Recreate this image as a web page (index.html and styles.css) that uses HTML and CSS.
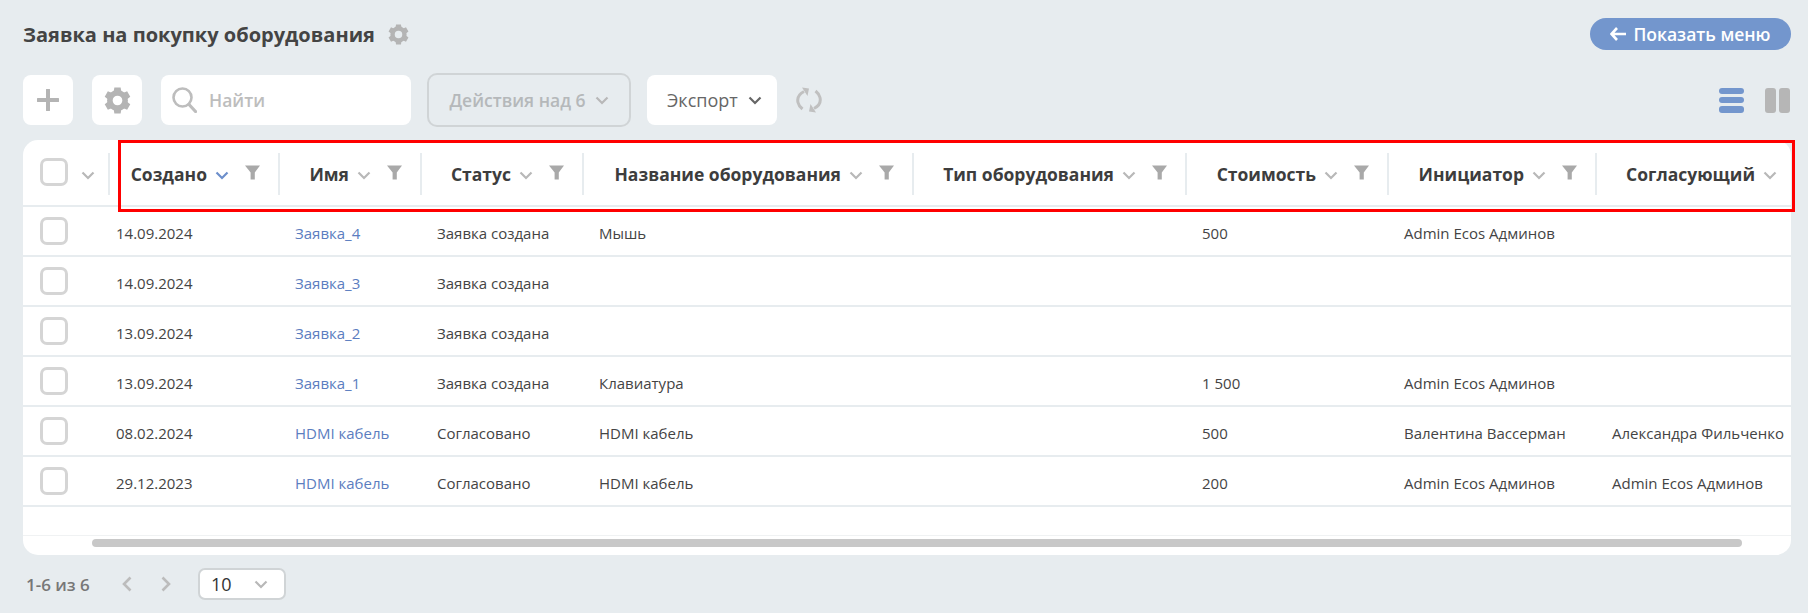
FILE: index.html
```html
<!DOCTYPE html>
<html lang="ru">
<head>
  <meta charset="UTF-8">
  <title>Заявка на покупку оборудования</title>
  <link rel="stylesheet" href="styles.css">
</head>
<body>
  <svg class="defs" width="0" height="0">
    <symbol id="gear" viewBox="0 0 24 24">
      <circle cx="12" cy="12" r="6.8" fill="none" stroke="currentColor" stroke-width="5"/>
      <g fill="currentColor">
        <path id="teeth" d="M9.2 .5h5.6l.6 4h-6.8zM8.6 19.500h6.800l-.6 4h-5.600z"/>
        <use href="#teeth" transform="rotate(60 12 12)"/>
        <use href="#teeth" transform="rotate(120 12 12)"/>
      </g>
    </symbol>
    <symbol id="chev" viewBox="0 0 14 9">
      <path d="M1.500 1.500 7 7l5.500-5.500" fill="none" stroke="currentColor" stroke-width="2.200"/>
    </symbol>
    <symbol id="funnel" viewBox="0 0 15 15">
      <path d="M0 .5h15L9.800 7.500V14.500H5.600V7.500z" fill="currentColor"/>
    </symbol>
  </svg>

  <header class="top">
    <h1 class="title">Заявка на покупку оборудования
      <svg class="title-gear"><use href="#gear"/></svg>
    </h1>
    <button class="show-menu">
      <svg width="16" height="14" viewBox="0 0 16 14"><path d="M7 1 1.500 7 7 13M2 7h14" fill="none" stroke="#fff" stroke-width="2.600"/></svg>
      Показать меню
    </button>
  </header>

  <div class="toolbar">
    <button class="square">
      <svg width="22" height="22" viewBox="0 0 22 22"><path d="M11 1v20M1 11h20" stroke="#b4b4b4" stroke-width="4" stroke-linecap="round"/></svg>
    </button>
    <button class="square">
      <svg class="tool-gear"><use href="#gear"/></svg>
    </button>
    <div class="search">
      <svg width="25" height="26" viewBox="0 0 25 26"><circle cx="10.500" cy="10.500" r="9" fill="none" stroke="#bdbdbd" stroke-width="2.600"/><path d="m17 17.500 6.500 7" stroke="#bdbdbd" stroke-width="3.200" stroke-linecap="round"/></svg>
      <span>Найти</span>
    </div>
    <button class="actions">Действия над 6 <svg class="chev"><use href="#chev"/></svg></button>
    <button class="export">Экспорт <svg class="chev"><use href="#chev"/></svg></button>
    <svg class="reload" width="26" height="26" viewBox="0 0 26 26">
      <g fill="none" stroke="#c0c0c0" stroke-width="3">
        <path d="M8 4.500C3 7 1 11 2 15.500c.5 2.500 2 4.500 4.500 6.500"/>
        <path d="M18 21.500c5-2.500 7-6.500 6-11-.5-2.500-2-4.500-4.500-6.500"/>
      </g>
      <path d="M6 .5 13 1.500 11.500 9zM20 25.500 13 24.500 14.500 17z" fill="#c0c0c0"/>
    </svg>
    <div class="views">
      <div class="view-list"><i></i><i></i><i></i></div>
      <div class="view-cols"><i></i><i></i></div>
    </div>
  </div>

  <div class="card">
    <table class="grid">
      <colgroup>
        <col class="c-check"><col class="c-date"><col class="c-name"><col class="c-status">
        <col class="c-equip"><col class="c-type"><col class="c-cost"><col class="c-init"><col class="c-appr">
      </colgroup>
      <thead>
        <tr>
          <th><div class="th-in th-check"><span class="box"></span><svg class="chev"><use href="#chev"/></svg></div></th>
          <th><div class="th-in">Создано <svg class="chev blue"><use href="#chev"/></svg><svg class="funnel"><use href="#funnel"/></svg></div></th>
          <th><div class="th-in">Имя <svg class="chev"><use href="#chev"/></svg><svg class="funnel"><use href="#funnel"/></svg></div></th>
          <th><div class="th-in">Статус <svg class="chev"><use href="#chev"/></svg><svg class="funnel"><use href="#funnel"/></svg></div></th>
          <th><div class="th-in">Название оборудования <svg class="chev"><use href="#chev"/></svg><svg class="funnel"><use href="#funnel"/></svg></div></th>
          <th><div class="th-in">Тип оборудования <svg class="chev"><use href="#chev"/></svg><svg class="funnel"><use href="#funnel"/></svg></div></th>
          <th><div class="th-in">Стоимость <svg class="chev"><use href="#chev"/></svg><svg class="funnel"><use href="#funnel"/></svg></div></th>
          <th><div class="th-in">Инициатор <svg class="chev"><use href="#chev"/></svg><svg class="funnel"><use href="#funnel"/></svg></div></th>
          <th><div class="th-in th-last">Согласующий <svg class="chev"><use href="#chev"/></svg></div></th>
        </tr>
      </thead>
      <tbody>
        <tr>
          <td class="td-check"><span class="box"></span></td><td class="td-date">14.09.2024</td>
          <td><a href="#">Заявка_4</a></td><td>Заявка создана</td><td>Мышь</td><td></td><td>500</td><td>Admin Ecos Админов</td><td></td>
        </tr>
        <tr>
          <td class="td-check"><span class="box"></span></td><td class="td-date">14.09.2024</td>
          <td><a href="#">Заявка_3</a></td><td>Заявка создана</td><td></td><td></td><td></td><td></td><td></td>
        </tr>
        <tr>
          <td class="td-check"><span class="box"></span></td><td class="td-date">13.09.2024</td>
          <td><a href="#">Заявка_2</a></td><td>Заявка создана</td><td></td><td></td><td></td><td></td><td></td>
        </tr>
        <tr>
          <td class="td-check"><span class="box"></span></td><td class="td-date">13.09.2024</td>
          <td><a href="#">Заявка_1</a></td><td>Заявка создана</td><td>Клавиатура</td><td></td><td>1 500</td><td>Admin Ecos Админов</td><td></td>
        </tr>
        <tr>
          <td class="td-check"><span class="box"></span></td><td class="td-date">08.02.2024</td>
          <td><a href="#">HDMI кабель</a></td><td>Согласовано</td><td>HDMI кабель</td><td></td><td>500</td><td>Валентина Вассерман</td><td>Александра Фильченко</td>
        </tr>
        <tr>
          <td class="td-check"><span class="box"></span></td><td class="td-date">29.12.2023</td>
          <td><a href="#">HDMI кабель</a></td><td>Согласовано</td><td>HDMI кабель</td><td></td><td>200</td><td>Admin Ecos Админов</td><td>Admin Ecos Админов</td>
        </tr>
      </tbody>
    </table>
    <div class="filler"></div>
    <div class="scroll"><div class="thumb"></div></div>
    <div class="red-frame"></div>
  </div>

  <div class="pager">
    <span class="count">1-6 из 6</span>
    <svg class="pg" width="10" height="16" viewBox="0 0 10 16"><path d="M8.500 1.500 2 8l6.500 6.500" fill="none" stroke="#bcbcbc" stroke-width="2.600"/></svg>
    <svg class="pg" width="10" height="16" viewBox="0 0 10 16"><path d="M1.500 1.500 8 8l-6.500 6.500" fill="none" stroke="#bcbcbc" stroke-width="2.600"/></svg>
    <div class="per-page"><span>10</span><svg class="chev wide"><use href="#chev"/></svg></div>
  </div>
</body>
</html>
```
FILE: styles.css
```css
* { box-sizing: border-box; }
body {
  margin: 0;
  padding: 18px 17px 0 23px;
  background: #e7ecef;
  font-family: "Open Sans", Arial, sans-serif;
  color: #444;
}
button {
  font-family: inherit;
  border: none;
  padding: 0;
}
.defs { position: absolute; }

/* top */
.top {
  display: flex;
  justify-content: space-between;
  align-items: center;
  height: 32px;
}
.title {
  display: flex;
  align-items: center;
  gap: 13px;
  margin: 0;
  font-size: 20px;
  font-weight: 700;
  color: #444;
}
.title-gear { width: 21px; height: 21px; color: #b4b4b4; }
.show-menu {
  display: flex;
  align-items: center;
  justify-content: center;
  gap: 7px;
  width: 201px;
  height: 32px;
  border-radius: 16px;
  background: #7396cd;
  color: #fff;
  font-size: 17.5px;
  font-weight: 600;
}

/* toolbar */
.toolbar {
  display: flex;
  align-items: center;
  height: 50px;
  margin: 25px 0 15px;
}
.square {
  display: flex;
  align-items: center;
  justify-content: center;
  width: 50px;
  height: 50px;
  margin-right: 19px;
  background: #fff;
  border-radius: 8px;
}
.tool-gear { width: 27px; height: 27px; color: #b4b4b4; }
.search {
  display: flex;
  align-items: center;
  gap: 12px;
  width: 250px;
  height: 50px;
  margin-right: 16px;
  padding-left: 11px;
  background: #fff;
  border-radius: 8px;
  font-size: 17.5px;
  font-weight: 600;
  color: #bdbdbd;
}
.chev { width: 14px; height: 9px; color: #b8b8b8; }
.chev.blue { color: #6d8fcb; }
.actions {
  display: flex;
  align-items: center;
  justify-content: center;
  gap: 9px;
  width: 204px;
  height: 54px;
  margin-right: 16px;
  background: transparent;
  border: 2px solid #d0d4d6;
  border-radius: 10px;
  font-size: 17.5px;
  font-weight: 600;
  color: #b5b8ba;
}
.export {
  display: flex;
  align-items: center;
  gap: 10px;
  width: 130px;
  height: 50px;
  margin-right: 19px;
  padding-left: 20px;
  background: #fff;
  border-radius: 8px;
  font-size: 18px;
  font-weight: 500;
  color: #666;
}
.export .chev { color: #666; }
.views {
  display: flex;
  gap: 21px;
  margin-left: auto;
  margin-right: 1px;
}
.view-list {
  display: flex;
  flex-direction: column;
  justify-content: space-between;
  width: 25px;
  height: 25px;
}
.view-list i {
  height: 6.500px;
  background: #7396cd;
  border-radius: 3px;
}
.view-cols {
  display: flex;
  gap: 3px;
  height: 25px;
}
.view-cols i {
  width: 11px;
  background: #b6b6b6;
  border-radius: 3px;
}

/* table card */
.card {
  position: relative;
  height: 415px;
  background: #fff;
  border-radius: 15px;
}
.grid {
  width: 1768px;
  table-layout: fixed;
  border-collapse: separate;
  border-spacing: 0;
}
.c-check { width: 87px; }
.c-date { width: 170px; }
.c-name { width: 142px; }
.c-status { width: 162px; }
.c-equip { width: 330px; }
.c-type { width: 273px; }
.c-cost { width: 202px; }
.c-init { width: 208px; }
.c-appr { width: 194px; }
.grid th {
  height: 67px;
  padding: 3px 0 0;
  border-bottom: 2px solid #e7ecef;
  font-weight: 700;
}
.th-in {
  display: flex;
  align-items: center;
  justify-content: flex-end;
  height: 42px;
  padding-right: 18px;
  border-right: 2px solid #e7ecef;
  font-size: 17.5px;
  color: #3d3d3d;
  white-space: nowrap;
}
.th-in .chev { margin: 3px 0 0 8px; }
.funnel {
  width: 15px;
  height: 15px;
  margin-left: 16px;
  margin-bottom: 3px;
  color: #a9a9a9;
}
.th-check {
  justify-content: flex-start;
  padding: 0 0 0 17px;
  gap: 13px;
}
.th-check .chev { margin-left: 0; }
.th-check .box { margin-bottom: 4px; }
.th-last {
  padding-right: 14px;
  border-right: none;
}
.box {
  display: block;
  width: 28px;
  height: 28px;
  background: #fff;
  border: 3px solid #d5d5d5;
  border-radius: 7px;
}
.grid td {
  height: 50px;
  padding: 3px 0 0 15px;
  border-bottom: 2px solid #e7ecef;
  font-size: 15px;
  color: #444;
  white-space: nowrap;
}
.grid td.td-check { padding: 0 0 0 17px; }
.grid td.td-date { padding-left: 6px; }
.grid a {
  color: #5b7dc0;
  text-decoration: none;
}
.filler {
  height: 29px;
  border-bottom: 1px solid #f0f2f3;
}
.scroll { padding: 3px 49px 0 69px; }
.thumb {
  height: 8px;
  background: #c8c8c8;
  border-radius: 4px;
}
.red-frame {
  position: absolute;
  left: 95px;
  right: -4px;
  top: 0;
  height: 72px;
  border: 3px solid #f00;
}

/* pager */
.pager {
  display: flex;
  align-items: center;
  height: 32px;
  margin-top: 13px;
  padding-left: 3px;
  font-size: 17px;
  color: #777;
}
.count { width: 96px; font-weight: 600; }
.pg { margin-right: 29px; }
.per-page {
  display: flex;
  align-items: center;
  justify-content: space-between;
  width: 88px;
  height: 32px;
  margin-left: -2px;
  padding: 0 16px 0 11px;
  background: #fff;
  border: 2px solid #d0d4d6;
  border-radius: 7px;
  font-size: 18px;
  color: #333;
}
```
